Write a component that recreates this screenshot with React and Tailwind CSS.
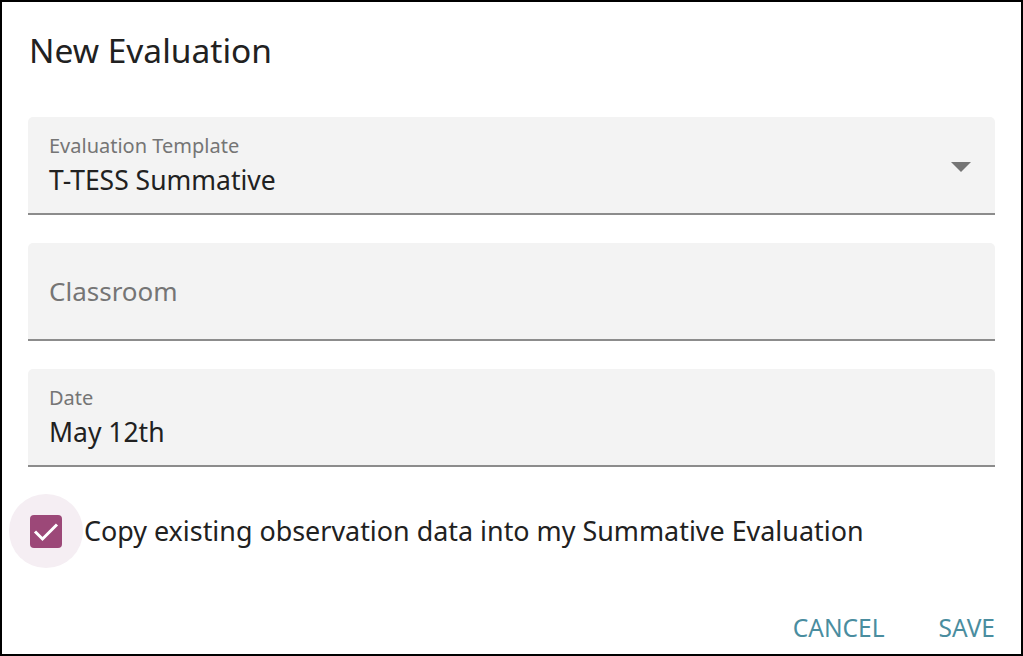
import React, { useState } from "react";

const font = { fontFamily: '"Noto Sans", "Open Sans", sans-serif' };

function Field({ label, value, placeholder, select }) {
  return (
    <div className="relative h-[98px] rounded-t-[5px] bg-[#f3f3f3] border-b-2 border-[#8c8c8c]">
      {placeholder ? (
        <div className="absolute left-[21px] top-[31px] text-[26px] leading-[34px] text-[#757575]">
          {placeholder}
        </div>
      ) : (
        <div className="pl-[21px] pt-[16px]">
          <div className="text-[20px] leading-[26px] text-[#757575]">{label}</div>
          <div className="mt-[5px] text-[26.5px] leading-[32px] text-[#212121]">{value}</div>
        </div>
      )}
      {select && (
        <svg
          className="absolute right-[24px] top-[45px]"
          width="20"
          height="10"
          viewBox="0 0 20 10"
        >
          <path d="M0 0 L20 0 L10 10 Z" fill="#757575" />
        </svg>
      )}
    </div>
  );
}

export default function App() {
  const [checked, setChecked] = useState(true);

  return (
    <div
      style={font}
      className="w-[1023px] h-[656px] border-2 border-black bg-white flex flex-col"
    >
      <h1 className="pl-[27px] pt-[27px] text-[33.5px] leading-[42px] text-[#212121]">
        New Evaluation
      </h1>

      <div className="mx-[26px] mt-[46px] flex flex-col gap-[28px]">
        <Field label="Evaluation Template" value="T-TESS Summative" select />
        <Field placeholder="Classroom" />
        <Field label="Date" value="May 12th" />
      </div>

      <div className="mt-[27px] ml-[7px] flex items-center">
        <button
          onClick={() => setChecked(!checked)}
          className="w-[74px] h-[74px] rounded-full bg-[#f5eef3] flex items-center justify-center"
        >
          {checked && (
            <span className="w-[32px] h-[33px] rounded-[4px] bg-[#9c4878] flex items-center justify-center">
              <svg width="32" height="33" viewBox="0 0 32 33">
                <path
                  d="M5 16.5 L12.5 24 L27 9.5"
                  fill="none"
                  stroke="white"
                  strokeWidth="3"
                />
              </svg>
            </span>
          )}
        </button>
        <span className="ml-[1px] text-[26.9px] text-[#212121]">
          Copy existing observation data into my Summative Evaluation
        </span>
      </div>

      <div className="mt-auto mb-[7px] mr-[26px] flex justify-end gap-[54px]">
        <button className="text-[24.5px] text-[#4a8d9f]">CANCEL</button>
        <button className="text-[24.5px] text-[#4a8d9f]">SAVE</button>
      </div>
    </div>
  );
}
